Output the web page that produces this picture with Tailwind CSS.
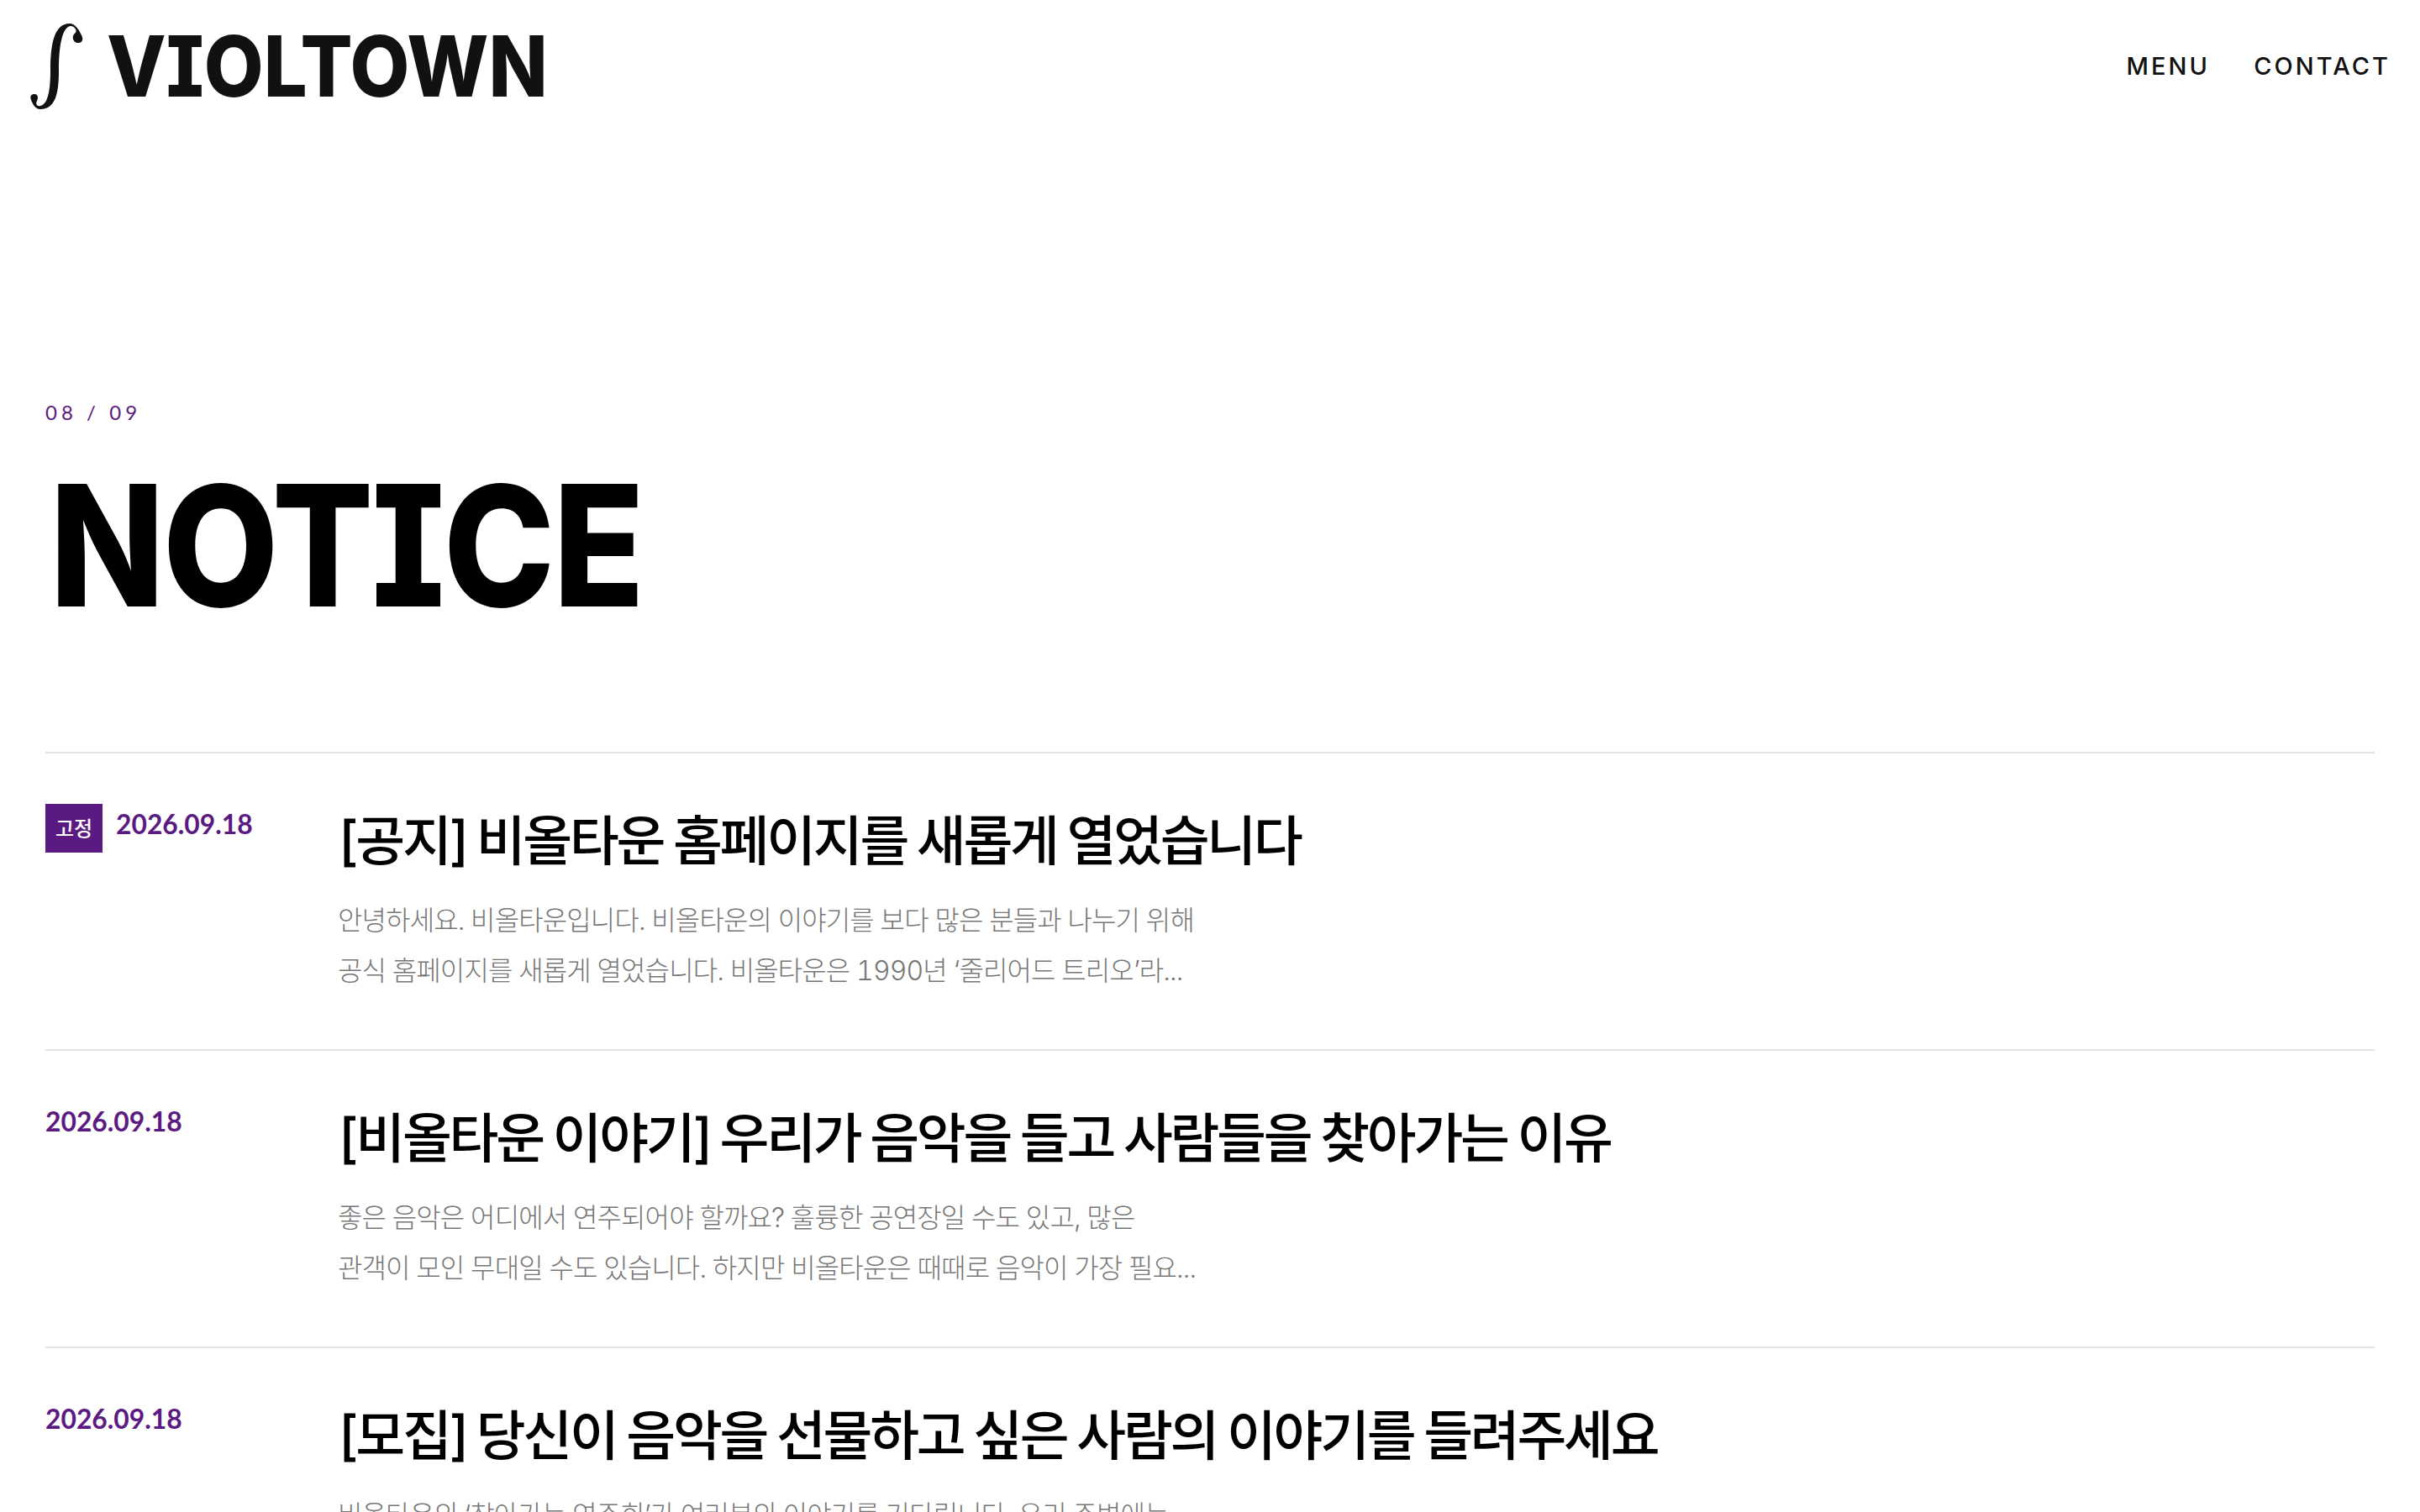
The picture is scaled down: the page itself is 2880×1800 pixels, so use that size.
<!doctype html>
<html lang="ko"><head><meta charset="utf-8"><title>VIOLTOWN</title>
<script src="https://cdn.jsdelivr.net/npm/@tailwindcss/browser@4"></script></head>
<body class="bg-white h-[1800px] overflow-hidden font-['Lato','Noto_Sans_CJK_KR',sans-serif]">
<header class="h-[157px] flex items-center justify-between pl-[36px] pr-[35px]">
  <a class="flex items-center gap-[27px] text-[#111]">
    <svg class="w-[64px] h-[104px]" viewBox="36 28 64 104" fill="#111"><path d="M60 85C60 55 64 29 83 29C89 29 94 36 97 43C100 49 97 52 93 52C88 52 86 47 87 44C88 40 92 40 90 36C88 32 84 31 81 33C73 38 70 60 70 85C70 110 67 131 48 131C42 131 39 125 37 120C35 115 38 113 41 113C45 113 46 117 44 121C42 125 44 128 48 127C58 125 60 105 60 85Z"/></svg>
    <span class="font-['Inter'] font-extrabold text-[100px] leading-none origin-left scale-x-[0.918] [font-feature-settings:'cv08']">VIOLTOWN</span>
  </a>
  <nav class="flex gap-[52px] font-['Inter'] font-medium text-[29px] tracking-[0.105em] text-[#111]">
    <a>MENU</a><a>CONTACT</a>
  </nav>
</header>
<main class="px-[54px]">
  <p class="mt-[322px] text-[24px] leading-none tracking-[0.21em] text-[#5b1a82] font-['Lato']">08 / 09</p>
  <h1 class="mt-[46px] pl-[6px] font-['Inter'] font-extrabold text-[200px] leading-none tracking-[-0.012em] origin-left scale-x-[0.892] text-black [font-feature-settings:'cv08']">NOTICE</h1>
  <ul class="mt-[146px]">
    <li class="border-t-2 border-[#e4e4de] h-[354px] flex">
      <div class="w-[349px] pt-[60px] flex items-start gap-[16px]">
        <span class="w-[68px] h-[58px] flex items-center justify-center bg-[#5b1a82] text-white text-[24px] font-medium">고정</span>
        <time class="pt-[4px] text-[31.8px] font-bold text-[#5b1a82] leading-[40px]">2026.09.18</time>
      </div>
      <div class="pt-[62px]">
        <h2 class="font-['Inter','Noto_Sans_CJK_KR',sans-serif] text-[64px] font-medium leading-[84px] tracking-[-0.051em] [word-spacing:-2px] text-black">[공지] 비올타운 홈페이지를 새롭게 열었습니다</h2>
        <p class="mt-[23px] -ml-[1px] font-['Inter','Noto_Sans_CJK_KR',sans-serif] [font-feature-settings:'tnum'] text-[32px] font-light leading-[60px] tracking-[-0.028em] text-[#777]">안녕하세요. 비올타운입니다. 비올타운의 이야기를 보다 많은 분들과 나누기 위해<br>공식 홈페이지를 새롭게 열었습니다. 비올타운은 1990년 ‘줄리어드 트리오’라...</p>
      </div>
    </li>
    <li class="border-t-2 border-[#e4e4de] h-[354px] flex">
      <div class="w-[349px] pt-[64px]">
        <time class="block text-[31.8px] font-bold text-[#5b1a82] leading-[40px]">2026.09.18</time>
      </div>
      <div class="pt-[62px]">
        <h2 class="font-['Inter','Noto_Sans_CJK_KR',sans-serif] text-[64px] font-medium leading-[84px] tracking-[-0.051em] [word-spacing:-2px] text-black">[비올타운 이야기] 우리가 음악을 들고 사람들을 찾아가는 이유</h2>
        <p class="mt-[23px] -ml-[1px] font-['Inter','Noto_Sans_CJK_KR',sans-serif] [font-feature-settings:'tnum'] text-[32px] font-light leading-[60px] tracking-[-0.028em] text-[#777]">좋은 음악은 어디에서 연주되어야 할까요? 훌륭한 공연장일 수도 있고, 많은<br>관객이 모인 무대일 수도 있습니다. 하지만 비올타운은 때때로 음악이 가장 필요...</p>
      </div>
    </li>
    <li class="border-t-2 border-[#e4e4de] h-[354px] flex">
      <div class="w-[349px] pt-[64px]">
        <time class="block text-[31.8px] font-bold text-[#5b1a82] leading-[40px]">2026.09.18</time>
      </div>
      <div class="pt-[62px]">
        <h2 class="font-['Inter','Noto_Sans_CJK_KR',sans-serif] text-[64px] font-medium leading-[84px] tracking-[-0.051em] [word-spacing:-2px] text-black">[모집] 당신이 음악을 선물하고 싶은 사람의 이야기를 들려주세요</h2>
        <p class="mt-[23px] -ml-[1px] font-['Inter','Noto_Sans_CJK_KR',sans-serif] [font-feature-settings:'tnum'] text-[32px] font-light leading-[60px] tracking-[-0.028em] text-[#777]">비올타운의 ‘찾아가는 연주회’가 여러분의 이야기를 기다립니다. 우리 주변에는</p>
      </div>
    </li>
  </ul>
</main>
</body></html>
